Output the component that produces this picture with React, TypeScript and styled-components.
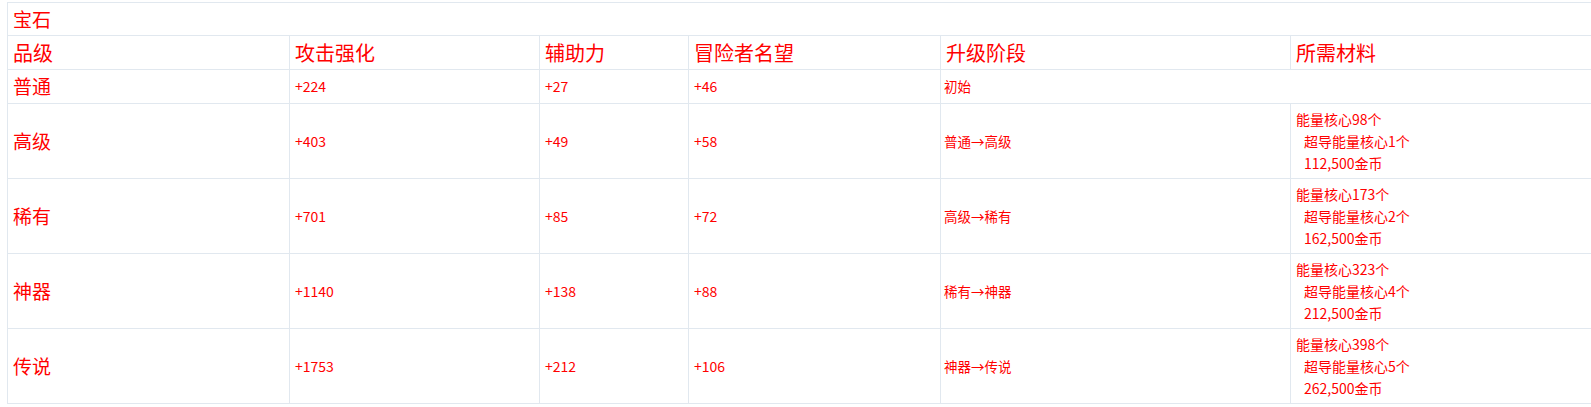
import styled, { createGlobalStyle } from 'styled-components';

const GlobalStyle = createGlobalStyle`
  html, body {
    margin: 0;
    padding: 0;
    background: #fff;
    overflow: hidden;
  }
  body {
    font-family: "Noto Sans CJK SC", "Noto Sans", sans-serif;
    color: #ff0000;
  }
`;

const Page = styled.div`
  padding: 2px 0 0 7px;
`;

const Table = styled.table`
  width: 1590px;
  table-layout: fixed;
  border-collapse: collapse;
  border: 1px solid #e1e8ef;
`;

const Col = styled.col<{ $w?: number }>`
  width: ${(p) => (p.$w ? `${p.$w}px` : 'auto')};
`;

const Row = styled.tr<{ $h: number }>`
  height: ${(p) => p.$h}px;
`;

const Cell = styled.td<{ $size: number; $pad?: number }>`
  border: 1px solid #e1e8ef;
  padding: 0 ${(p) => p.$pad ?? 5}px;
  font-size: ${(p) => p.$size}px;
  line-height: 1.2;
  vertical-align: middle;
  color: #ff0000;
  white-space: nowrap;
`;

const Line = styled.div<{ $indent?: boolean }>`
  line-height: 22px;
  padding-left: ${(p) => (p.$indent ? 8 : 0)}px;
`;

type Tier = {
  name: string;
  atk: string;
  aux: string;
  fame: string;
  stage: string;
  cores: string;
  super: string;
  gold: string;
};

const tiers: Tier[] = [
  { name: '高级', atk: '+403', aux: '+49', fame: '+58', stage: '普通→高级', cores: '能量核心98个', super: '超导能量核心1个', gold: '112,500金币' },
  { name: '稀有', atk: '+701', aux: '+85', fame: '+72', stage: '高级→稀有', cores: '能量核心173个', super: '超导能量核心2个', gold: '162,500金币' },
  { name: '神器', atk: '+1140', aux: '+138', fame: '+88', stage: '稀有→神器', cores: '能量核心323个', super: '超导能量核心4个', gold: '212,500金币' },
  { name: '传说', atk: '+1753', aux: '+212', fame: '+106', stage: '神器→传说', cores: '能量核心398个', super: '超导能量核心5个', gold: '262,500金币' },
];

const headers = ['品级', '攻击强化', '辅助力', '冒险者名望', '升级阶段', '所需材料'];

export default function App() {
  return (
    <>
      <GlobalStyle />
      <Page>
        <Table>
          <colgroup>
            <Col $w={282} />
            <Col $w={250} />
            <Col $w={149} />
            <Col $w={252} />
            <Col $w={350} />
            <Col />
          </colgroup>
          <tbody>
            <Row $h={33}>
              <Cell $size={19} colSpan={6}>宝石</Cell>
            </Row>
            <Row $h={34}>
              {headers.map((h) => (
                <Cell key={h} $size={20}>{h}</Cell>
              ))}
            </Row>
            <Row $h={34}>
              <Cell $size={19}>普通</Cell>
              <Cell $size={14}>+224</Cell>
              <Cell $size={14}>+27</Cell>
              <Cell $size={14}>+46</Cell>
              <Cell $size={13.5} $pad={3} colSpan={2}>初始</Cell>
            </Row>
            {tiers.map((t) => (
              <Row $h={75} key={t.name}>
                <Cell $size={19}>{t.name}</Cell>
                <Cell $size={14}>{t.atk}</Cell>
                <Cell $size={14}>{t.aux}</Cell>
                <Cell $size={14}>{t.fame}</Cell>
                <Cell $size={13.5} $pad={3}>{t.stage}</Cell>
                <Cell $size={14}>
                  <Line>{t.cores}</Line>
                  <Line $indent>{t.super}</Line>
                  <Line $indent>{t.gold}</Line>
                </Cell>
              </Row>
            ))}
          </tbody>
        </Table>
      </Page>
    </>
  );
}
